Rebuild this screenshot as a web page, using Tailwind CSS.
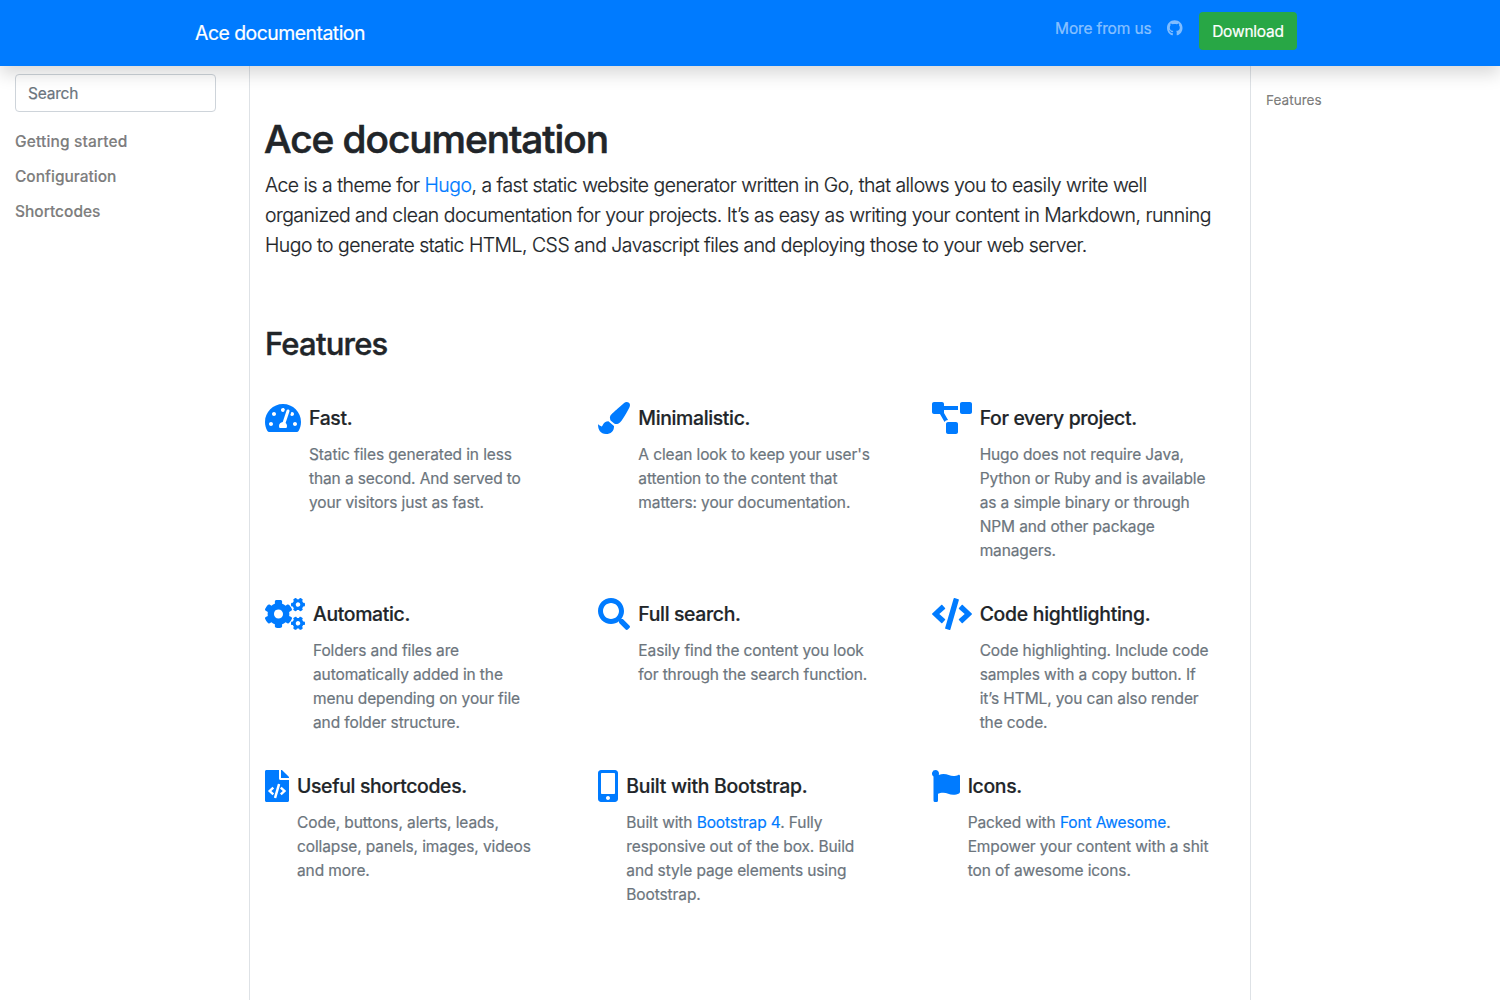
<!DOCTYPE html>
<html lang="en">
<head>
<meta charset="utf-8">
<title>Ace documentation</title>
<script src="https://cdn.jsdelivr.net/npm/@tailwindcss/browser@4"></script>
</head>
<body class="flex h-screen flex-col overflow-hidden bg-white font-[Inter,sans-serif] text-[15.5px] leading-6 text-[#212529] [-webkit-text-stroke-width:0.2px]">
<header class="relative z-10 h-[66px] shrink-0 bg-[#007bff] shadow-[0_8px_16px_rgba(0,0,0,0.15)]">
  <div class="flex h-full items-start justify-between pt-3 pr-[203px] pl-[195px]">
    <a href="#" class="mt-1.5 text-[19.4px] leading-[30px] tracking-[-0.5px] text-white">Ace documentation</a>
    <nav class="flex items-start">
      <a href="#" class="mt-[5px] tracking-[-0.14px] text-white/50">More from us</a>
      <a href="#" class="mt-2 mr-[0.5px] ml-[15.5px] text-white/50" aria-label="GitHub"><svg class="h-4 w-[15.5px]" viewBox="0 0 496 512" fill="currentColor"><path d="M244.8 8C106.1 8 0 113.3 0 252c0 110.900 69.800 205.800 169.500 239.200 12.800 2.300 17.300-5.600 17.300-12.100 0-6.200-.3-40.400-.3-61.400 0 0-70 15-84.700-29.800 0 0-11.400-29.100-27.800-36.600 0 0-22.900-15.700 1.600-15.400 0 0 24.900 2 38.600 25.800 21.900 38.600 58.600 27.500 72.900 20.900 2.300-16 8.800-27.100 16-33.700-55.900-6.200-112.300-14.300-112.300-110.500 0-27.500 7.600-41.300 23.600-58.900-2.600-6.500-11.100-33.300 2.600-67.900 20.900-6.500 69 27 69 27 20-5.600 41.500-8.500 62.800-8.500s42.800 2.900 62.800 8.500c0 0 48.100-33.600 69-27 13.700 34.700 5.200 61.400 2.600 67.900 16 17.700 25.800 31.500 25.800 58.900 0 96.500-58.900 104.200-114.800 110.500 9.200 7.900 17 22.900 17 46.400 0 33.700-.3 75.400-.3 83.600 0 6.500 4.600 14.400 17.300 12.100C428.200 457.800 496 362.900 496 252 496 113.300 383.500 8 244.800 8z"/></svg></a>
      <a href="#" class="ml-4 flex h-[38px] w-[98px] items-center justify-center rounded-[4px] bg-[#28a745] pt-0.5 tracking-[-0.22px] text-white">Download</a>
    </nav>
  </div>
</header>

<div class="flex min-h-0 flex-1">
  <aside class="w-[250px] shrink-0 border-r border-[#dee2e6] pt-2 pl-[15px]">
    <input type="text" placeholder="Search" class="block h-[38px] w-[201px] rounded-[4px] border border-[#ced4da] px-3 tracking-[-0.22px] placeholder:text-[#6c757d]">
    <nav class="mt-[18px] flex flex-col gap-[11px] font-medium text-black/50">
      <a href="#" class="tracking-[0.15px]">Getting started</a>
      <a href="#">Configuration</a>
      <a href="#">Shortcodes</a>
    </nav>
  </aside>

  <main class="w-[1000px] shrink-0 px-[15px] pt-[49px]">
    <h1 class="-ml-px text-[38.8px] leading-[48px] font-medium tracking-[-1.04px] [-webkit-text-stroke-width:0.6px]">Ace documentation</h1>
    <p class="mt-[7px] text-[19.4px] leading-[30px] font-light tracking-[-0.489px] whitespace-nowrap">Ace is a theme for <a href="#" class="text-[#007bff]">Hugo</a>, a fast static website generator written in Go, that allows you to easily write well<br>organized and clean documentation for your projects. It’s as easy as writing your content in Markdown, running<br>Hugo to generate static HTML, CSS and Javascript files and deploying those to your web server.</p>
    <h2 class="mt-[65px] text-[31px] leading-[38px] font-medium tracking-[-0.78px] [-webkit-text-stroke-width:0.4px]">Features</h2>

    <div class="mt-[39px] -mr-[15px] grid grid-cols-[333.33px_333.33px_1fr] gap-y-[35px] tracking-[-0.11px] whitespace-nowrap">
      <section class="flex items-start gap-2">
        <svg class="h-8 w-9 shrink-0 text-[#007bff]" viewBox="0 0 576 512" fill="currentColor"><path d="M288 32C128.940 32 0 160.940 0 320c0 52.800 14.250 102.260 39.060 144.800 5.610 9.620 16.300 15.200 27.440 15.200h443c11.140 0 21.830-5.580 27.440-15.200C561.750 422.260 576 372.800 576 320c0-159.060-128.940-288-288-288zm0 64c14.710 0 26.580 10.130 30.320 23.650-1.110 2.260-2.640 4.230-3.450 6.670l-9.220 27.670c-5.130 3.490-10.970 6.010-17.640 6.010-17.670 0-32-14.330-32-32S270.330 96 288 96zM96 384c-17.670 0-32-14.330-32-32s14.330-32 32-32 32 14.330 32 32-14.330 32-32 32zm48-160c-17.670 0-32-14.330-32-32s14.330-32 32-32 32 14.330 32 32-14.330 32-32 32zm246.770-72.410l-61.330 184C343.130 347.330 352 364.540 352 384c0 11.720-3.380 22.550-8.880 32H232.880c-5.500-9.450-8.880-20.280-8.880-32 0-33.940 26.500-61.430 59.900-63.590l61.340-184.010c4.170-12.560 17.730-19.450 30.360-15.170 12.570 4.190 19.350 17.790 15.170 30.360zm14.660 57.200l15.520-46.550c3.470-1.290 7.130-2.230 11.050-2.230 17.670 0 32 14.330 32 32s-14.330 32-32 32c-11.380-.01-20.890-6.280-26.570-15.220zM480 384c-17.670 0-32-14.330-32-32s14.330-32 32-32 32 14.330 32 32-14.330 32-32 32z"/></svg>
        <div class="pt-1"><h3 class="mb-[13px] text-[19.4px] leading-6 font-medium tracking-[-0.34px]">Fast.</h3><p class="text-[#6c757d]">Static files generated in less<br>than a second. And served to<br>your visitors just as fast.</p></div>
      </section>
      <section class="flex items-start gap-2">
        <svg class="size-8 shrink-0 text-[#007bff]" viewBox="0 0 512 512" fill="currentColor"><path d="M167.020 309.340c-40.120 2.580-76.530 17.860-97.190 72.300-2.350 6.210-8 9.980-14.590 9.980-11.110 0-45.460-27.670-55.250-34.350C0 439.620 37.930 512 128 512c75.860 0 128-43.770 128-120.190 0-3.110-.65-6.080-.97-9.130l-88.010-73.340zM457.890 0c-15.160 0-29.370 6.710-40.210 16.450C213.270 199.050 192 203.340 192 257.090c0 13.700 3.250 26.760 8.730 38.700l63.820 53.180c7.210 1.800 14.640 3.030 22.390 3.030 62.110 0 98.110-45.470 211.160-256.460 7.380-14.350 13.900-29.850 13.900-45.990C512 20.640 486 0 457.890 0z"/></svg>
        <div class="pt-1"><h3 class="mb-[13px] text-[19.4px] leading-6 font-medium tracking-[-0.34px]">Minimalistic.</h3><p class="text-[#6c757d]">A clean look to keep your user's<br>attention to the content that<br>matters: your documentation.</p></div>
      </section>
      <section class="flex items-start gap-2">
        <svg class="h-8 w-10 shrink-0 text-[#007bff]" viewBox="0 0 640 512" fill="currentColor"><path d="M384 320H256c-17.670 0-32 14.330-32 32v128c0 17.670 14.330 32 32 32h128c17.670 0 32-14.330 32-32V352c0-17.670-14.330-32-32-32zM192 32c0-17.670-14.330-32-32-32H32C14.330 0 0 14.330 0 32v128c0 17.670 14.330 32 32 32h95.720l73.160 128.040C211.980 300.980 232.400 288 256 288h.28L192 175.510V128h224V64H192V32zM608 0H480c-17.670 0-32 14.330-32 32v128c0 17.670 14.330 32 32 32h128c17.670 0 32-14.330 32-32V32c0-17.670-14.330-32-32-32z"/></svg>
        <div class="pt-1"><h3 class="mb-[13px] text-[19.4px] leading-6 font-medium tracking-[-0.34px]">For every project.</h3><p class="text-[#6c757d]">Hugo does not require Java,<br>Python or Ruby and is available<br>as a simple binary or through<br>NPM and other package<br>managers.</p></div>
      </section>

      <section class="flex items-start gap-2">
        <svg class="h-8 w-10 shrink-0 text-[#007bff]" viewBox="0 0 640 512" fill="currentColor"><defs><path id="small-cog" d="M512.1 191l-8.200 14.300c-3 5.300-9.400 7.500-15.100 5.400-11.800-4.400-22.600-10.700-32.100-18.600-4.600-3.800-5.800-10.500-2.800-15.700l8.200-14.300c-6.900-8-12.300-17.300-15.900-27.400h-16.500c-6 0-11.200-4.300-12.200-10.300-2-12-2.100-24.600 0-37.100 1-6 6.200-10.400 12.200-10.400h16.500c3.600-10.100 9-19.400 15.900-27.400l-8.200-14.300c-3-5.200-1.900-11.900 2.800-15.700 9.500-7.900 20.400-14.200 32.100-18.600 5.700-2.100 12.100.1 15.100 5.400l8.200 14.300c10.500-1.900 21.200-1.900 31.700 0L552 6.300c3-5.300 9.400-7.500 15.100-5.400 11.800 4.400 22.600 10.700 32.100 18.600 4.600 3.800 5.800 10.500 2.800 15.700l-8.200 14.300c6.900 8 12.300 17.300 15.900 27.400h16.500c6 0 11.200 4.300 12.200 10.300 2 12 2.100 24.600 0 37.100-1 6-6.200 10.400-12.200 10.400h-16.500c-3.600 10.100-9 19.400-15.900 27.400l8.200 14.300c3 5.200 1.900 11.900-2.800 15.700-9.500 7.900-20.400 14.200-32.100 18.600-5.700 2.100-12.100-.1-15.100-5.400l-8.200-14.300c-10.400 1.900-21.200 1.900-31.700 0zm-10.500-58.800c38.500 29.600 82.400-14.300 52.800-52.800-38.500-29.700-82.400 14.300-52.800 52.800z"/></defs><use href="#small-cog"/><use href="#small-cog" y="298.9"/><path d="M386.300 286.100l33.700 16.800c10.100 5.800 14.500 18.100 10.500 29.100-8.900 24.200-26.400 46.400-42.600 65.800-7.400 8.900-20.200 11.100-30.300 5.300l-29.100-16.800c-16 13.700-34.600 24.600-54.900 31.700v33.600c0 11.600-8.300 21.600-19.700 23.600-24.600 4.200-50.400 4.400-75.900 0-11.500-2-20-11.900-20-23.600V418c-20.300-7.200-38.900-18-54.900-31.700L74 403c-10 5.800-22.900 3.600-30.300-5.300-16.200-19.400-33.300-41.600-42.200-65.700-4-10.900.4-23.200 10.500-29.100l33.300-16.800c-3.900-20.900-3.900-42.400 0-63.400L12 205.800c-10.100-5.800-14.600-18.100-10.500-29 8.900-24.200 26-46.400 42.200-65.800 7.400-8.900 20.200-11.100 30.300-5.300l29.100 16.800c16-13.700 34.600-24.600 54.900-31.700V57.100c0-11.500 8.200-21.500 19.600-23.500 24.600-4.200 50.500-4.400 76-.1 11.500 2 20 11.900 20 23.600v33.600c20.300 7.200 38.900 18 54.900 31.700l29.100-16.800c10-5.800 22.900-3.600 30.300 5.300 16.200 19.400 33.200 41.600 42.100 65.800 4 10.900.1 23.200-10 29.100l-33.700 16.800c3.900 21 3.900 42.500 0 63.500zm-117.600 21.100c59.200-77-28.700-164.900-105.700-105.700-59.200 77 28.700 164.900 105.700 105.700z"/></svg>
        <div class="pt-1"><h3 class="mb-[13px] text-[19.4px] leading-6 font-medium tracking-[-0.34px]">Automatic.</h3><p class="text-[#6c757d]">Folders and files are<br>automatically added in the<br>menu depending on your file<br>and folder structure.</p></div>
      </section>
      <section class="flex items-start gap-2">
        <svg class="size-8 shrink-0 text-[#007bff]" viewBox="0 0 512 512" fill="currentColor"><path d="M505 442.700L405.300 343c-4.500-4.500-10.600-7-17-7H372c27.600-35.300 44-79.700 44-128C416 93.100 322.900 0 208 0S0 93.100 0 208s93.100 208 208 208c48.300 0 92.700-16.400 128-44v16.300c0 6.400 2.500 12.500 7 17l99.700 99.700c9.400 9.400 24.600 9.400 33.900 0l28.300-28.300c9.400-9.400 9.400-24.600.1-34zM208 336c-70.700 0-128-57.200-128-128 0-70.700 57.200-128 128-128 70.700 0 128 57.200 128 128 0 70.700-57.200 128-128 128z"/></svg>
        <div class="pt-1"><h3 class="mb-[13px] text-[19.4px] leading-6 font-medium tracking-[-0.34px]">Full search.</h3><p class="text-[#6c757d]">Easily find the content you look<br>for through the search function.</p></div>
      </section>
      <section class="flex items-start gap-2">
        <svg class="h-8 w-10 shrink-0 text-[#007bff]" viewBox="0 0 640 512" fill="currentColor"><path d="M278.900 511.500l-61-17.700c-6.400-1.800-10-8.500-8.200-14.900L346.200 8.700c1.800-6.400 8.500-10 14.900-8.200l61 17.700c6.400 1.800 10 8.500 8.200 14.900L293.800 503.300c-1.900 6.400-8.500 10.100-14.900 8.200zm-114-112.200l43.500-46.400c4.600-4.900 4.300-12.700-.8-17.200L117 256l90.600-79.700c5.100-4.500 5.500-12.300.8-17.200l-43.500-46.400c-4.500-4.800-12.100-5.100-17-.5L3.800 247.200c-5.100 4.700-5.100 12.800 0 17.500l144.100 135.100c4.900 4.600 12.500 4.400 17-.5zm327.200.6l144.100-135.100c5.100-4.700 5.100-12.800 0-17.500L492.100 112.100c-4.800-4.500-12.400-4.300-17 .5L431.600 159c-4.600 4.900-4.300 12.700.8 17.200L523 256l-90.600 79.700c-5.100 4.500-5.500 12.300-.8 17.200l43.500 46.400c4.500 4.900 12.100 5.100 17 .6z"/></svg>
        <div class="pt-1"><h3 class="mb-[13px] text-[19.4px] leading-6 font-medium tracking-[-0.27px]">Code hightlighting.</h3><p class="text-[#6c757d]">Code highlighting. Include code<br>samples with a copy button. If<br>it’s HTML, you can also render<br>the code.</p></div>
      </section>

      <section class="flex items-start gap-2">
        <svg class="h-8 w-6 shrink-0 text-[#007bff]" viewBox="0 0 384 512" fill="currentColor"><path d="M384 121.941V128H256V0h6.059c6.365 0 12.470 2.529 16.971 7.029l97.941 97.941A24.005 24.005 0 0 1 384 121.941zM248 160c-13.200 0-24-10.800-24-24V0H24C10.745 0 0 10.745 0 24v464c0 13.255 10.745 24 24 24h336c13.255 0 24-10.745 24-24V160H248zM123.206 400.505a5.400 5.400 0 0 1-7.633.246l-64.866-60.812a5.400 5.400 0 0 1 0-7.879l64.866-60.812a5.400 5.400 0 0 1 7.633.246l19.579 20.885a5.400 5.400 0 0 1-.372 7.747L101.650 336l40.763 35.874a5.400 5.400 0 0 1 .372 7.747l-19.579 20.884zm51.295 50.479l-27.453-7.970a5.402 5.402 0 0 1-3.681-6.692l61.440-211.626a5.402 5.402 0 0 1 6.692-3.681l27.452 7.970a5.400 5.400 0 0 1 3.680 6.692l-61.440 211.626a5.397 5.397 0 0 1-6.690 3.681zm160.792-111.045l-64.866 60.812a5.400 5.400 0 0 1-7.633-.246l-19.580-20.885a5.400 5.400 0 0 1 .372-7.747L284.350 336l-40.763-35.874a5.400 5.400 0 0 1-.372-7.747l19.580-20.885a5.400 5.400 0 0 1 7.633-.246l64.866 60.812a5.400 5.400 0 0 1-.001 7.879z"/></svg>
        <div class="pt-1"><h3 class="mb-[13px] text-[19.4px] leading-6 font-medium tracking-[-0.34px]">Useful shortcodes.</h3><p class="text-[#6c757d]">Code, buttons, alerts, leads,<br>collapse, panels, images, videos<br>and more.</p></div>
      </section>
      <section class="flex items-start gap-2">
        <svg class="h-8 w-5 shrink-0 text-[#007bff]" viewBox="0 0 320 512" fill="currentColor"><path d="M272 0H48C21.500 0 0 21.500 0 48v416c0 26.500 21.500 48 48 48h224c26.500 0 48-21.500 48-48V48c0-26.500-21.500-48-48-48zM160 480c-17.700 0-32-14.300-32-32s14.300-32 32-32 32 14.300 32 32-14.300 32-32 32zm112-108c0 6.600-5.400 12-12 12H60c-6.600 0-12-5.400-12-12V60c0-6.600 5.400-12 12-12h200c6.600 0 12 5.400 12 12v312z"/></svg>
        <div class="pt-1"><h3 class="mb-[13px] text-[19.4px] leading-6 font-medium tracking-[-0.26px]">Built with Bootstrap.</h3><p class="text-[#6c757d]">Built with <a href="#" class="text-[#007bff]">Bootstrap 4</a>. Fully<br>responsive out of the box. Build<br>and style page elements using<br>Bootstrap.</p></div>
      </section>
      <section class="flex items-start gap-2">
        <svg class="h-8 w-7 shrink-0 text-[#007bff]" viewBox="0 0 448 512" fill="currentColor"><path d="M56 0a56 56 0 0 1 55 66c-1 5-2 10-3 13C132 68 158 63 184 63c64 0 106 33 160 33 28 0 54-8 75-17 14-6 29 4 29 19V347c0 12-6 22-15 27-28 15-58 23-93 23-62 0-100-34-160-34-37 0-66 9-84 18V488a24 24 0 0 1-24 24H48a24 24 0 0 1-24-24V102A56 56 0 0 1 56 0z"/></svg>
        <div class="pt-1"><h3 class="mb-[13px] text-[19.4px] leading-6 font-medium tracking-[-0.34px]">Icons.</h3><p class="text-[#6c757d]">Packed with <a href="#" class="text-[#007bff]">Font Awesome</a>.<br>Empower your content with a shit<br>ton of awesome icons.</p></div>
      </section>
    </div>
  </main>

  <aside class="flex-1 border-l border-[#dee2e6] pt-6 pl-[15px] text-[13.6px] leading-[21px]">
    <a href="#" class="text-black/50">Features</a>
  </aside>
</div>
</body>
</html>
